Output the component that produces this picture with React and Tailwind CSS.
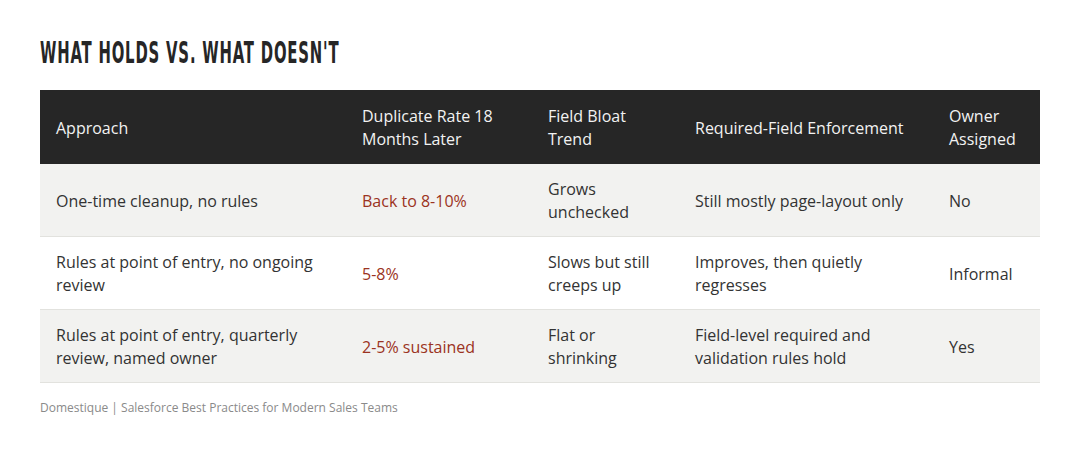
const rows = [
  {
    approach: "One-time cleanup, no rules",
    rate: "Back to 8-10%",
    bloat: "Grows unchecked",
    enforcement: "Still mostly page-layout only",
    owner: "No",
    shade: true,
  },
  {
    approach: "Rules at point of entry, no ongoing review",
    rate: "5-8%",
    bloat: "Slows but still creeps up",
    enforcement: "Improves, then quietly regresses",
    owner: "Informal",
    shade: false,
  },
  {
    approach: "Rules at point of entry, quarterly review, named owner",
    rate: "2-5% sustained",
    bloat: "Flat or shrinking",
    enforcement: "Field-level required and validation rules hold",
    owner: "Yes",
    shade: true,
  },
];

const App = () => {
  return (
    <div className="w-[1080px] h-[456px] bg-white px-10 pt-[36px] font-['Open_Sans',sans-serif] text-[#333]">
      <h2 className="origin-left scale-x-[0.55] whitespace-nowrap font-['DejaVu_Sans_Condensed','DejaVu_Sans',sans-serif] font-stretch-condensed font-bold uppercase text-[30px] leading-[34px] tracking-[1.5px] text-[#262626]">
        What Holds vs. What Doesn't
      </h2>

      <table className="mt-[20px] w-[1000px] table-fixed border-collapse text-[16px] leading-[23px]">
        <colgroup>
          <col className="w-[306px]" />
          <col className="w-[186px]" />
          <col className="w-[147px]" />
          <col className="w-[254px]" />
          <col className="w-[107px]" />
        </colgroup>
        <thead>
          <tr className="bg-[#262626] text-[#f2f2f2] text-left">
            <th className="font-normal px-4 pt-[15px] pb-[13px]">Approach</th>
            <th className="font-normal px-4 pt-[15px] pb-[13px]">Duplicate Rate 18 Months Later</th>
            <th className="font-normal px-4 pt-[15px] pb-[13px]">Field Bloat Trend</th>
            <th className="font-normal px-4 pt-[15px] pb-[13px]">Required-Field Enforcement</th>
            <th className="font-normal px-4 pt-[15px] pb-[13px]">Owner Assigned</th>
          </tr>
        </thead>
        <tbody>
          {rows.map((row, i) => (
            <tr
              key={i}
              className={`border-b border-[#e2e2de] ${row.shade ? "bg-[#f2f2f0]" : "bg-white"}`}
            >
              <td className="px-4 pt-[14px] pb-[12px]">{row.approach}</td>
              <td className="px-4 pt-[14px] pb-[12px] text-[#9b3322]">{row.rate}</td>
              <td className="px-4 pt-[14px] pb-[12px]">{row.bloat}</td>
              <td className="px-4 pt-[14px] pb-[12px]">{row.enforcement}</td>
              <td className="px-4 pt-[14px] pb-[12px]">{row.owner}</td>
            </tr>
          ))}
        </tbody>
      </table>

      <p className="mt-[16px] text-[12px] leading-[18px] text-[#8a8a8a]">
        Domestique | Salesforce Best Practices for Modern Sales Teams
      </p>
    </div>
  );
};

export default App;
